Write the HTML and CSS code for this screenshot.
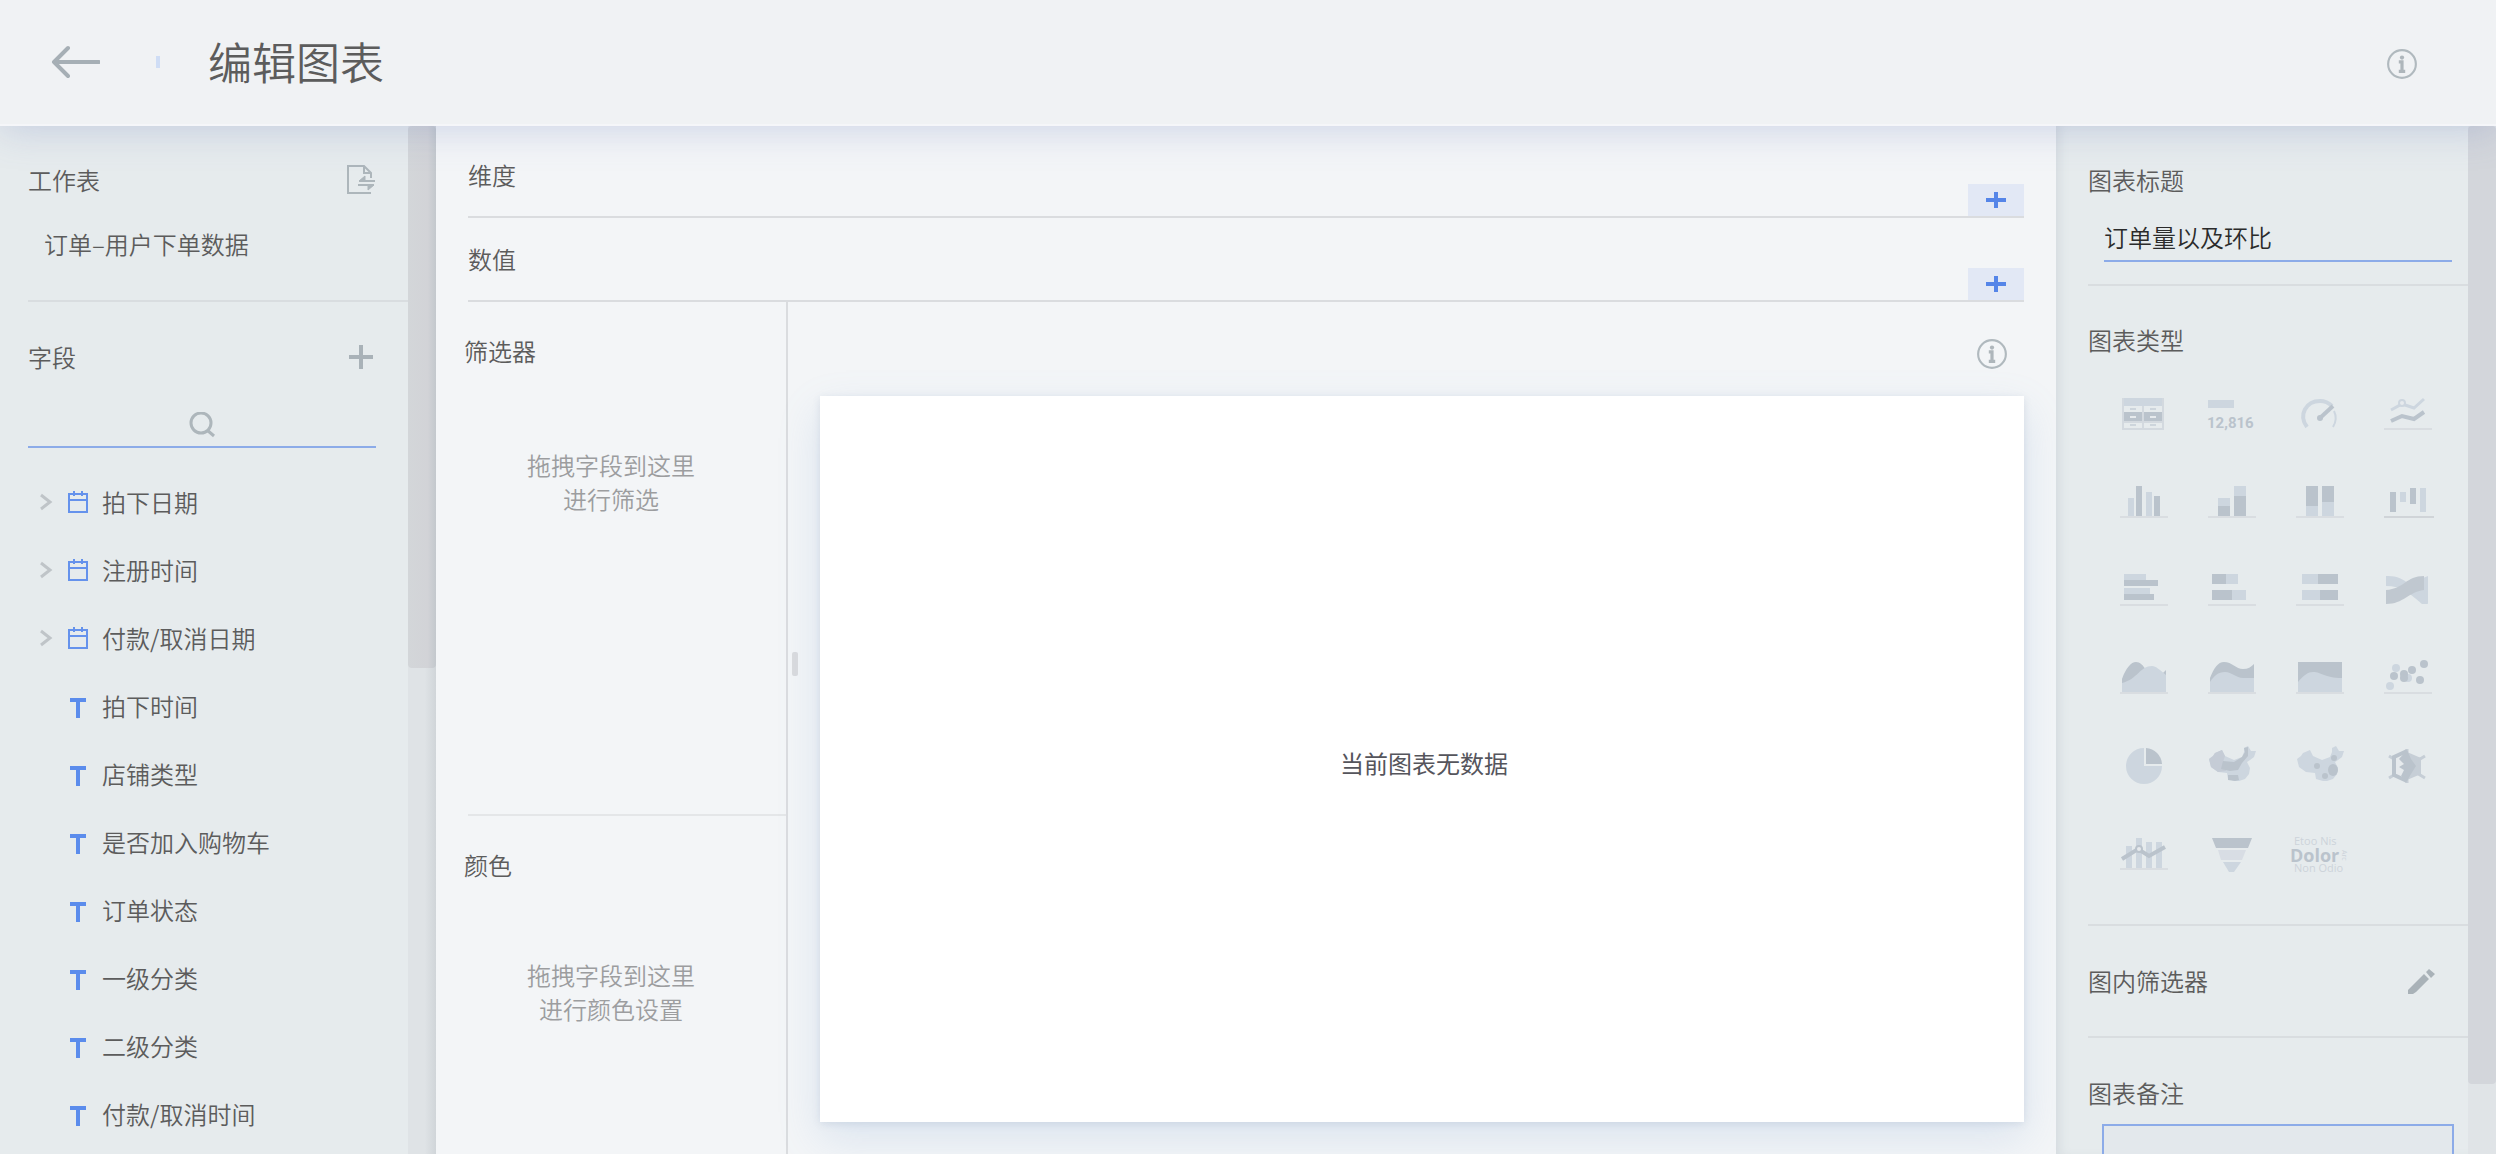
FILE: index.html
```html
<!DOCTYPE html>
<html lang="zh-CN">
<head>
  <meta charset="UTF-8">
  <meta name="viewport" content="width=device-width, initial-scale=1.0">
  <title>编辑图表</title>
  <link rel="stylesheet" href="styles.css">
</head>
<body>
  <header class="header">
    <button class="icon-btn back" aria-label="返回">
      <svg width="50" height="34" viewBox="0 0 50 34" fill="none" stroke="#a6afb5" stroke-width="4" stroke-linecap="round" stroke-linejoin="round"><path d="M49 17H4M18 3L4 17L18 31"/></svg>
    </button>
    <span class="mark"></span>
    <h1>编辑图表</h1>
    <button class="icon-btn info" aria-label="说明">
      <svg width="32" height="32" viewBox="0 0 30 30"><use href="#i-info"/></svg>
    </button>
  </header>

  <div class="main">
    <aside class="side side-left">
      <div class="side-body">
        <section class="sheet">
          <div class="title-row">
            <h2>工作表</h2>
            <button class="icon-btn" aria-label="切换工作表">
              <svg width="30" height="30" viewBox="0 0 30 30" fill="none" stroke="#adb6bb" stroke-width="2"><path d="M25 28H2V1H18L25 8V13M18 1V8H25"/><path d="M29 16H13L19 11V16M12 20H28L22 25V20" fill="#adb6bb" stroke-width="1"/><path d="M13 16H29M12 20H28"/></svg>
            </button>
          </div>
          <p class="sheet-name">订单–用户下单数据</p>
        </section>
        <section class="fields">
          <div class="title-row">
            <h2>字段</h2>
            <button class="icon-btn" aria-label="添加字段">
              <svg width="30" height="30" viewBox="0 0 30 30" stroke="#a9b2b8" stroke-width="4"><path d="M3 15H27M15 3V27"/></svg>
            </button>
          </div>
          <div class="search">
            <input type="text" aria-label="搜索字段">
            <svg width="26" height="26" viewBox="0 0 26 26" fill="none" stroke="#adb6bb" stroke-width="3"><circle cx="12" cy="11" r="10"/><path d="M18 18L25 24"/></svg>
          </div>
          <ul class="field-list">
            <li><svg class="arrow"><use href="#i-arrow"/></svg><svg class="type"><use href="#i-date"/></svg>拍下日期</li>
            <li><svg class="arrow"><use href="#i-arrow"/></svg><svg class="type"><use href="#i-date"/></svg>注册时间</li>
            <li><svg class="arrow"><use href="#i-arrow"/></svg><svg class="type"><use href="#i-date"/></svg>付款/取消日期</li>
            <li><span class="arrow"></span><svg class="type"><use href="#i-text"/></svg>拍下时间</li>
            <li><span class="arrow"></span><svg class="type"><use href="#i-text"/></svg>店铺类型</li>
            <li><span class="arrow"></span><svg class="type"><use href="#i-text"/></svg>是否加入购物车</li>
            <li><span class="arrow"></span><svg class="type"><use href="#i-text"/></svg>订单状态</li>
            <li><span class="arrow"></span><svg class="type"><use href="#i-text"/></svg>一级分类</li>
            <li><span class="arrow"></span><svg class="type"><use href="#i-text"/></svg>二级分类</li>
            <li><span class="arrow"></span><svg class="type"><use href="#i-text"/></svg>付款/取消时间</li>
          </ul>
        </section>
      </div>
      <div class="scroll"><div class="thumb thumb-left"></div></div>
    </aside>

    <main class="center">
      <div class="axis">
        <h2>维度</h2>
        <button class="add" aria-label="添加维度"><svg width="20" height="16" viewBox="0 0 20 16"><use href="#i-add"/></svg></button>
      </div>
      <div class="axis">
        <h2>数值</h2>
        <button class="add" aria-label="添加数值"><svg width="20" height="16" viewBox="0 0 20 16"><use href="#i-add"/></svg></button>
      </div>
      <div class="work">
        <div class="drops">
          <section class="drop drop-filter">
            <h2>筛选器</h2>
            <p class="hint">拖拽字段到这里<br>进行筛选</p>
          </section>
          <section class="drop drop-color">
            <h2>颜色</h2>
            <p class="hint">拖拽字段到这里<br>进行颜色设置</p>
          </section>
        </div>
        <div class="handle"></div>
        <div class="preview">
          <div class="tools">
            <button class="icon-btn" aria-label="图表说明">
              <svg width="32" height="32" viewBox="0 0 30 30"><use href="#i-info"/></svg>
            </button>
          </div>
          <div class="chart">当前图表无数据</div>
        </div>
      </div>
    </main>

    <aside class="side side-right">
      <div class="side-body">
        <section class="name">
          <h2><label for="chart-name">图表标题</label></h2>
          <input id="chart-name" type="text" value="订单量以及环比">
        </section>
        <section class="types">
          <h2>图表类型</h2>
          <div class="type-grid">
            <button aria-label="表格"><svg viewBox="0 0 48 48"><path class="l" d="M2 12h42v8H2z"/><path class="d" d="M4 26h38v10H4z"/><path class="o" d="M3 12V43H43V12M23 20V43M3 36H43"/><path d="M10 23h6M30 23h6M10 39h6M30 39h6" stroke="#cdd5dc" stroke-width="2"/><path d="M10 31h6M30 31h6" stroke="#e6eaed" stroke-width="2"/></svg></button>
            <button aria-label="指标卡"><svg viewBox="0 0 48 48"><path class="l" d="M0 14h26v8H0z"/><text class="d num" x="-1" y="42">12,816</text></svg></button>
            <button aria-label="仪表盘"><svg viewBox="0 0 48 48"><g fill="none" stroke="#cdd6df" stroke-width="4"><path d="M11 41C2 29 10 15 24 15C29 15 33 17 36 20"/><path d="M38 25C41 31 40 36 37 41" stroke-width="2"/></g><path d="M24 32L37 20" stroke="#bac3cc" stroke-width="4"/><circle class="d" cx="24" cy="32" r="3"/></svg></button>
            <button aria-label="折线图"><svg viewBox="0 0 48 48"><g fill="none" stroke-width="3"><path d="M7 24L18 18L30 22L40 13" stroke="#cdd6df"/><path d="M7 35L18 30L30 33L40 26" stroke="#bac3cc" stroke-width="4"/></g><circle cx="18" cy="17" r="3" fill="#e6eaed" stroke="#cdd6df" stroke-width="2"/><path class="b" d="M0 43H48"/></svg></button>

            <button aria-label="柱状图"><svg viewBox="0 0 48 48"><path class="l" d="M8 24h6v18H8zM26 18h6v24h-6z"/><path class="d" d="M16 12h6v30h-6zM34 22h6v20h-6z"/><path class="b" d="M0 43H48"/></svg></button>
            <button aria-label="堆积柱状图"><svg viewBox="0 0 48 48"><path class="l" d="M10 24h12v8H10zM26 12h12v10H26z"/><path class="d" d="M10 32h12v10H10zM26 22h12v20H26z"/><path class="b" d="M0 43H48"/></svg></button>
            <button aria-label="百分比柱状图"><svg viewBox="0 0 48 48"><path class="d" d="M10 12h12v20H10zM26 12h12v16H26z"/><path class="l" d="M10 32h12v10H10zM26 28h12v14H26z"/><path class="b" d="M0 43H48"/></svg></button>
            <button aria-label="瀑布图"><svg viewBox="0 0 48 48"><path class="d" d="M6 18h6v20H6zM26 14h6v16h-6z"/><path class="l" d="M16 18h6v10h-6zM36 14h6v24h-6z"/><path d="M0 43H50" stroke="#d0d4d8" stroke-width="2"/></svg></button>

            <button aria-label="条形图"><svg viewBox="0 0 48 48"><path class="l" d="M4 12h22v6H4zM4 26h26v6H4z"/><path class="d" d="M4 18h34v6H4zM4 32h30v6H4z"/><path class="b" d="M0 43H48"/></svg></button>
            <button aria-label="堆积条形图"><svg viewBox="0 0 48 48"><path class="d" d="M4 12h14v10H4zM4 28h20v10H4z"/><path class="l" d="M18 12h12v10H18zM24 28h14v10H24z"/><path class="b" d="M0 43H48"/></svg></button>
            <button aria-label="百分比条形图"><svg viewBox="0 0 48 48"><path class="l" d="M6 12h16v10H6zM6 28h18v10H6z"/><path class="d" d="M22 12h20v10H22zM24 28h18v10H24z"/><path class="b" d="M0 43H48"/></svg></button>
            <button aria-label="桑基图"><svg viewBox="0 0 48 48"><path class="l" d="M2 14C22 13 28 26 44 42V42H38C24 30 18 24 2 24z"/><path class="l" d="M24 22L44 14V42L30 34z"/><path fill="#c0c8d0" d="M2 28C20 27 22 14 40 14V28C24 30 20 42 2 42z"/></svg></button>

            <button aria-label="面积图"><svg viewBox="0 0 48 48"><path class="d" d="M2 42V29C6 18 11 12 16 12C20 12 23 15 26 20L42 24L46 20V42z"/><path class="l" d="M2 42V33C18 29 20 16 32 16C36 16 40 20 46 25V42z"/><path class="b" d="M0 43H48"/></svg></button>
            <button aria-label="堆积面积图"><svg viewBox="0 0 48 48"><path class="d" d="M2 42V28C6 18 10 12 16 12C24 12 28 19 35 19C40 19 43 17 46 14V42z"/><path class="l" d="M2 42V32C6 26 10 22 17 22C24 22 28 28 35 28H46V42z"/><path class="b" d="M0 43H48"/></svg></button>
            <button aria-label="百分比面积图"><svg viewBox="0 0 48 48"><path class="d" d="M2 12H46V42H2z"/><path class="l" d="M2 42V32C8 25 12 22 17 22C26 22 28 28 46 28V42z"/><path class="b" d="M0 43H48"/></svg></button>
            <button aria-label="散点图"><svg viewBox="0 0 48 48"><g class="l"><circle cx="6" cy="36" r="4"/><circle cx="12" cy="18" r="4"/><circle cx="24" cy="28" r="4"/></g><g class="d"><circle cx="10" cy="26" r="4"/><circle cx="20" cy="24" r="4"/><circle cx="20" cy="28" r="4"/><circle cx="28" cy="20" r="4"/><circle cx="40" cy="14" r="4"/><circle cx="36" cy="30" r="4"/></g><path class="b" d="M0 43H48"/></svg></button>

            <button aria-label="饼图"><svg viewBox="0 0 48 48"><path class="l" d="M24 10A18 18 0 1 0 42 28H24z"/><path class="d" d="M26 10A17 17 0 0 1 42 26H26z"/></svg></button>
            <button aria-label="区域地图"><svg viewBox="0 0 48 48"><use class="l" href="#i-china"/><path fill="#c5ccd6" d="M1 21L5 18L7 15L14 12L17 18L15 24L18 33L10 34L3 29z"/><path class="d" d="M15 23L26 24L34 19L37 14L36 10L40 9L40 18L34 25L30 32L22 33L13 31zM20 37H30L31 42L27 43L20 42z"/></svg></button>
            <button aria-label="气泡地图"><svg viewBox="0 0 48 48"><use class="l" href="#i-china"/><g class="d"><circle cx="21" cy="28" r="3"/><ellipse cx="37" cy="32" rx="5" ry="6"/><circle cx="29" cy="38" r="3"/><circle cx="38" cy="20" r="3"/></g></svg></button>
            <button aria-label="雷达图"><svg viewBox="0 0 48 48"><path d="M23 11V45M5 18L41 40M41 18L5 40" stroke="#c6ced6" stroke-width="3"/><path fill="#c6ced6" d="M23 14L37 20V36L23 42z"/><path fill="#e6eaed" d="M10 19L23 14V42L10 37z"/><path class="d" d="M23 12L27 21L32 28L27 36L23 43L17 38L20 32L15 29L20 26L15 21z"/><path d="M23 13L10 19V37L23 43" fill="none" stroke="#bac3cc" stroke-width="4"/></svg></button>

            <button aria-label="组合图"><svg viewBox="0 0 48 48"><path class="l" d="M6 20h6v22H6zM16 12h6v30h-6zM26 16h6v26h-6zM36 16h6v26h-6z"/><path d="M2 33L18 23L29 30L45 21" fill="none" stroke="#bac3cc" stroke-width="4"/><circle cx="19" cy="23" r="3" fill="#e6eaed" stroke="#bac3cc" stroke-width="2"/><path class="b" d="M0 43H48"/></svg></button>
            <button aria-label="漏斗图"><svg viewBox="0 0 48 48"><path class="d" d="M4 12H44L40 22H8z"/><path fill="#d8dde4" d="M10 24H38L34 34H13z"/><path class="l" d="M15 36H33L26 46H21z"/></svg></button>
            <button aria-label="词云"><svg viewBox="0 0 48 48"><text class="cloud" x="-2" y="19">Etoo Nis</text><text class="d dolor" x="-6" y="36">Dolor</text><text class="cloud" x="-2" y="46">Non Odio</text><text class="cloud tiny" transform="translate(46 24) rotate(90)">Arc</text></svg></button>
          </div>
        </section>
        <section class="inner-filter">
          <div class="title-row">
            <h2>图内筛选器</h2>
            <button class="icon-btn" aria-label="编辑图内筛选器">
              <svg width="30" height="30" viewBox="0 0 30 30" fill="#a9b2b8"><path d="M2 28V24L18 8L23 13L10 26L7 28zM20 6L23 3L29 8L25 12z"/></svg>
            </button>
          </div>
        </section>
        <section class="remark">
          <h2><label for="remark">图表备注</label></h2>
          <textarea id="remark"></textarea>
        </section>
      </div>
      <div class="scroll"><div class="thumb thumb-right"></div></div>
    </aside>
  </div>

  <svg class="defs" aria-hidden="true">
    <symbol id="i-info" viewBox="0 0 30 30"><circle cx="15" cy="15" r="13" fill="none" stroke="#b0b9be" stroke-width="2"/><circle cx="15" cy="9" r="2" fill="#aeb6bb"/><path d="M12 13H15V22M12 22H18" fill="none" stroke="#aeb6bb" stroke-width="3"/></symbol>
    <symbol id="i-arrow" viewBox="0 0 14 20"><path d="M2 3L11 10L2 17" fill="none" stroke="#bfc4c8" stroke-width="3"/></symbol>
    <symbol id="i-date" viewBox="0 0 24 24"><path d="M3 4H21V22H3zM3 10H21M8 1V6M16 1V6" fill="none" stroke="#6592ec" stroke-width="2"/></symbol>
    <symbol id="i-text" viewBox="0 0 24 24"><path d="M4 4H20V8H14V24H10V8H4z" fill="#5b8cec"/></symbol>
    <symbol id="i-add" viewBox="0 0 20 16"><path d="M0 8H20M10 0V16" stroke="#5585e8" stroke-width="4"/></symbol>
    <symbol id="i-china" viewBox="0 0 48 48"><path d="M1 21L5 18L7 15L14 12L17 18L26 22L34 19L36 14V10L40 8L43 13L48 13L46 19L42 22L39 24L42 30L41 36L37 41L31 43L27 43L20 41L19 35L10 34L3 29z"/></symbol>
  </svg>
</body>
</html>
```
FILE: styles.css
```css
*, *::before, *::after {
  box-sizing: border-box;
}
body {
  margin: 0;
  height: 100vh;
  display: flex;
  flex-direction: column;
  overflow: hidden;
  font-family: "Noto Sans CJK SC", sans-serif;
  font-weight: 350;
  font-size: 24px;
  line-height: 34px;
  color: #5c5c5c;
  background: #f3f5f7;
}
h1, h2, p, ul {
  margin: 0;
  padding: 0;
  font-weight: inherit;
}
h2 {
  font-size: inherit;
}
button, input, textarea {
  font: inherit;
  color: inherit;
  border: 0;
  padding: 0;
  background: none;
  outline: none;
}
button {
  cursor: pointer;
}
svg {
  display: block;
}
.defs {
  position: absolute;
  width: 0;
  height: 0;
}
.icon-btn {
  display: flex;
}

/* header */
.header {
  position: relative;
  z-index: 2;
  flex: none;
  height: 126px;
  display: flex;
  align-items: center;
  padding: 0 78px 0 50px;
  background: #f0f2f4;
  border-bottom: 2px solid #f5f6f9;
  box-shadow: 0 4px 36px rgba(100, 120, 185, 0.26);
}
.mark {
  width: 4px;
  height: 12px;
  margin: 0 48px 0 56px;
  background: #cfddf5;
}
.header h1 {
  padding-bottom: 2px;
  font-size: 44px;
  line-height: 60px;
}
.info {
  margin-left: auto;
  padding-top: 4px;
}

/* layout */
.main {
  flex: 1;
  min-height: 0;
  display: flex;
}
.side {
  flex: none;
  display: flex;
  background: #e6ebed;
}
.side-left {
  width: 436px;
}
.side-right {
  width: 440px;
  box-shadow: inset 8px 0 12px -6px rgba(90, 110, 130, 0.15);
}
.side-body {
  flex: 1;
  min-width: 0;
  overflow: hidden;
}
.side-left .side-body {
  padding-left: 28px;
}
.side-right .side-body {
  padding-left: 32px;
}
.scroll {
  width: 28px;
  background: #e0e4e7;
}
.side-left .scroll {
  background: linear-gradient(to right, #dfe3e6 60%, #d0d5d9);
}
.thumb {
  border-radius: 4px;
  background: #d3d6db;
}
.thumb-left {
  height: 542px;
  background: linear-gradient(to right, #d3d6d9, #d2d3d7 70%, #c3c8cd);
}
.thumb-right {
  height: 958px;
}
.title-row {
  display: flex;
  align-items: center;
  justify-content: space-between;
  padding-right: 32px;
}

/* worksheet and fields */
.sheet {
  height: 176px;
  padding-top: 37px;
  border-bottom: 2px solid #d9dde0;
}
.sheet-name {
  padding: 30px 0 0 16px;
}
.fields {
  padding-top: 38px;
}
.search {
  position: relative;
  width: 348px;
  margin: 24px 0 20px;
}
.search input {
  display: block;
  width: 100%;
  height: 50px;
  border-bottom: 2px solid #8cabe8;
}
.search svg {
  position: absolute;
  left: 50%;
  top: 14px;
  margin-left: -13px;
}
.field-list {
  list-style: none;
}
.field-list li {
  height: 68px;
  display: flex;
  align-items: center;
  padding-left: 11px;
}
.field-list .arrow {
  width: 14px;
  height: 20px;
  margin-right: 13px;
}
.field-list .type {
  width: 24px;
  height: 24px;
  margin-right: 12px;
}

/* center */
.center {
  flex: 1;
  min-width: 0;
  display: flex;
  flex-direction: column;
  padding-top: 8px;
}
.axis {
  flex: none;
  height: 84px;
  margin: 0 32px;
  display: flex;
  align-items: flex-end;
  justify-content: space-between;
  border-bottom: 2px solid #dadcdf;
}
.axis h2 {
  padding-bottom: 24px;
}
.add {
  width: 56px;
  height: 32px;
  display: flex;
  align-items: center;
  justify-content: center;
  background: #e2e8f5;
}
.work {
  flex: 1;
  min-height: 0;
  display: flex;
}
.drops {
  width: 352px;
  flex: none;
  border-right: 2px solid #dadcdf;
}
.drop {
  padding-top: 32px;
}
.drop h2 {
  padding-left: 28px;
}
.drop-filter {
  height: 512px;
}
.drop-color::before {
  content: "";
  display: block;
  height: 2px;
  margin: 0 0 32px 32px;
  background: #e4e6e8;
}
.drop-color {
  padding-top: 0;
}
.hint {
  padding-top: 80px;
  text-align: center;
  color: #9c9d9f;
}
.drop-color .hint {
  padding-top: 76px;
}
.handle {
  flex: none;
  align-self: center;
  width: 6px;
  height: 24px;
  margin: 0 22px 128px 4px;
  border-radius: 2px;
  background: #dadbde;
}
.preview {
  flex: 1;
  min-width: 0;
  display: flex;
  flex-direction: column;
  padding: 0 32px 32px 0;
}
.tools {
  height: 94px;
  padding: 36px 16px 0 0;
  display: flex;
  justify-content: flex-end;
  align-items: flex-start;
}
.chart {
  flex: 1;
  display: flex;
  align-items: center;
  justify-content: center;
  padding: 8px 0 0 4px;
  color: #55555c;
  font-weight: 400;
  background: #fff;
  box-shadow: 0 16px 40px rgba(120, 160, 210, 0.2), 0 2px 8px rgba(60, 80, 120, 0.12);
}

/* chart settings */
.name {
  height: 160px;
  padding-top: 37px;
  border-bottom: 2px solid #d9dde0;
}
.name input {
  display: block;
  width: 348px;
  height: 45px;
  margin: 20px 0 0 16px;
  padding-bottom: 4px;
  color: #2b2b2b;
  border-bottom: 2px solid #8cabe8;
}
.types {
  height: 640px;
  padding-top: 37px;
  border-bottom: 2px solid #d9dde0;
}
.type-grid {
  display: grid;
  grid-template-columns: repeat(4, 88px);
  grid-auto-rows: 88px;
  margin: 9px 0 0 12px;
}
.type-grid button {
  display: flex;
  align-items: center;
  justify-content: center;
}
.type-grid svg {
  width: 48px;
  height: 48px;
  overflow: visible;
}
.l {
  fill: #cdd6df;
}
.d {
  fill: #bac3cc;
}
.o {
  fill: none;
  stroke: #d3d9df;
  stroke-width: 2;
}
.b {
  stroke: #d9dde1;
  stroke-width: 2;
}
.num {
  font: 700 15px Roboto, sans-serif;
}
.cloud {
  font: 400 11px "Open Sans", sans-serif;
  fill: #cdd3da;
}
.dolor {
  font: 700 18px "Open Sans", sans-serif;
}
.tiny {
  font-size: 7px;
}
.inner-filter {
  height: 112px;
  padding-top: 38px;
  border-bottom: 2px solid #d9dde0;
}
.remark {
  padding-top: 38px;
}
.remark textarea {
  display: block;
  width: 352px;
  height: 120px;
  margin: 14px 0 0 14px;
  border: 2px solid #8cabe8;
  background: #e3e8ec;
  resize: none;
}
```
